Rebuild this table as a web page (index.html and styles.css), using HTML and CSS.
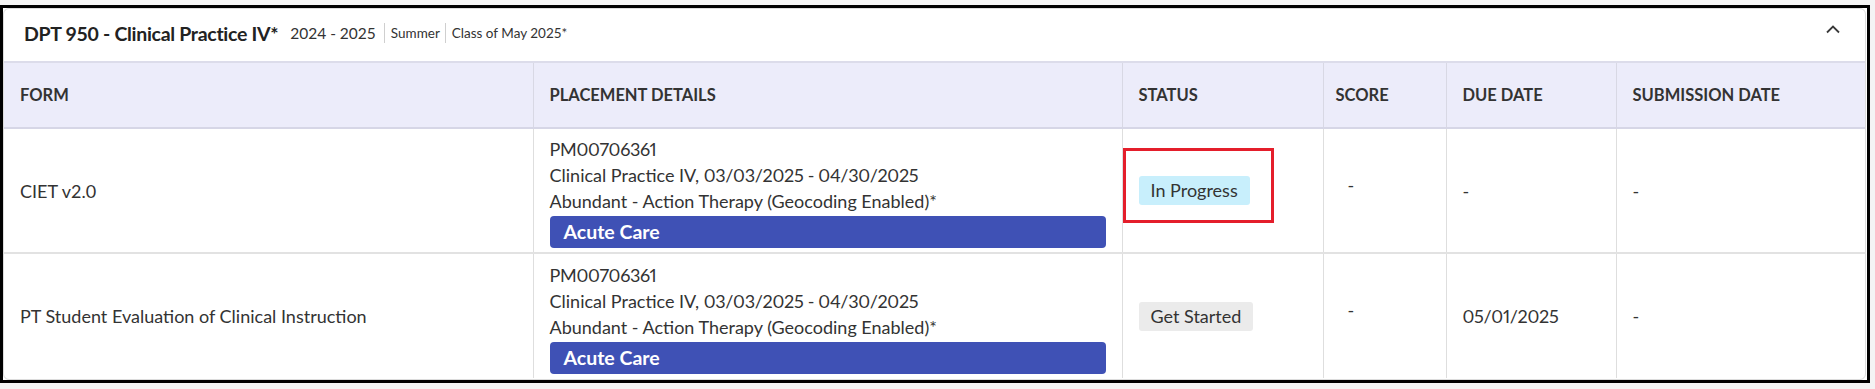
FILE: index.html
```html
<!DOCTYPE html>
<html lang="en">
<head>
<meta charset="utf-8">
<title>Clinical Practice IV</title>
<link rel="stylesheet" href="styles.css">
</head>
<body>
<div class="frame">
  <section class="card">
    <header class="card-head">
      <h2 class="title">DPT 950 - Clinical Practice IV*</h2>
      <span class="year">2024 - 2025</span>
      <span class="meta">Summer</span>
      <span class="meta">Class of May 2025*</span>
      <button class="collapse" aria-label="Collapse">
        <svg width="16" height="10" viewBox="0 0 16 10"><polyline points="2,8.5 8,2.5 14,8.5" fill="none" stroke="#3a3a3a" stroke-width="1.8"/></svg>
      </button>
    </header>
    <table class="grid">
      <colgroup>
        <col class="c-form"><col class="c-place"><col class="c-status"><col class="c-score"><col class="c-due"><col class="c-sub">
      </colgroup>
      <thead>
        <tr>
          <th>Form</th>
          <th>Placement Details</th>
          <th>Status</th>
          <th class="th-score">Score</th>
          <th>Due Date</th>
          <th>Submission Date</th>
        </tr>
      </thead>
      <tbody>
        <tr>
          <td>CIET v2.0</td>
          <td class="place">
            <div><span class="num">PM00706361</span></div>
            <div>Clinical Practice IV, <span class="num">03/03/2025 - 04/30/2025</span></div>
            <div>Abundant - Action Therapy (Geocoding Enabled)*</div>
            <div class="tag">Acute Care</div>
          </td>
          <td class="status">
            <span class="badge progress">In Progress</span>
            <span class="highlight"></span>
          </td>
          <td class="score">-</td>
          <td>-</td>
          <td>-</td>
        </tr>
        <tr>
          <td>PT Student Evaluation of Clinical Instruction</td>
          <td class="place">
            <div><span class="num">PM00706361</span></div>
            <div>Clinical Practice IV, <span class="num">03/03/2025 - 04/30/2025</span></div>
            <div>Abundant - Action Therapy (Geocoding Enabled)*</div>
            <div class="tag">Acute Care</div>
          </td>
          <td class="status">
            <span class="badge start">Get Started</span>
          </td>
          <td class="score">-</td>
          <td><span class="num">05/01/2025</span></td>
          <td>-</td>
        </tr>
      </tbody>
    </table>
  </section>
</div>
</body>
</html>
```

FILE: styles.css
```css
* { box-sizing: border-box; }

html, body {
  margin: 0;
  padding: 0;
}

body {
  background: #f4f4f4;
  font-family: "Lato", "Liberation Sans", sans-serif;
  color: #333;
  padding-top: 5px;
}

.frame {
  width: 1870px;
  height: 378px;
  border: 3px solid #000;
  background: #fff;
  padding-right: 1px;
}

.card {
  height: 100%;
  border: 1px solid #dcdcdc;
  border-radius: 6px;
  background: #fff;
  overflow: hidden;
}

.card-head {
  display: flex;
  align-items: center;
  height: 54px;
  padding: 0 24px 4px 20px;
  border-bottom: 2px solid #dcdcea;
}

.title {
  margin: 0 12px 0 0;
  font-size: 19.5px;
  font-weight: 700;
  color: #222;
  letter-spacing: -0.3px;
}

.year {
  font-size: 15.5px;
  color: #333;
  padding-right: 8px;
}

.meta {
  font-size: 13.5px;
  color: #333;
  border-left: 1px solid #cfcfcf;
  padding: 2px 5px 2px 6px;
  line-height: 16px;
}

.collapse {
  margin-left: auto;
  margin-bottom: 8px;
  border: 0;
  background: none;
  padding: 0;
  display: flex;
  align-items: center;
  cursor: pointer;
}

.grid {
  width: 100%;
  border-collapse: collapse;
  table-layout: fixed;
  font-size: 18px;
}

.num {
  font-variant-numeric: proportional-nums;
  letter-spacing: -0.3px;
}

.c-form { width: 529px; }
.c-place { width: 589px; }
.c-status { width: 201px; }
.c-score { width: 123px; }
.c-due { width: 170px; }

.grid th {
  background: #ececfa;
  height: 65px;
  text-align: left;
  text-transform: uppercase;
  font-weight: 700;
  font-size: 16.5px;
  color: #333;
  padding: 0 16px;
  border-left: 1px solid #d8d8e4;
  border-bottom: 2px solid #d6d6e6;
}

.grid th:first-child,
.grid td:first-child { border-left: 0; }

.grid th.th-score { padding-left: 12px; }

.grid td {
  padding: 0 16px;
  border-left: 1px solid #dedede;
  border-bottom: 2px solid #e2e2e2;
  vertical-align: middle;
  line-height: 26px;
}

.grid tbody tr:last-child td { border-bottom: 0; }

.grid tbody tr:first-child { height: 124px; }
.grid tbody tr:last-child { height: 125px; }

.grid td.place {
  padding: 7px 16px 4px;
}

.tag {
  margin-top: 2px;
  height: 32px;
  line-height: 32px;
  background: #3f51b5;
  color: #fff;
  font-weight: 700;
  font-size: 19.5px;
  border-radius: 4px;
  padding-left: 14px;
}

.status { position: relative; }

.badge {
  display: inline-block;
  height: 29px;
  line-height: 29px;
  padding: 0 12px;
  border-radius: 3px;
  font-size: 18px;
  color: #333;
}

.progress { background: #c8effc; }
.start { background: #ebebeb; }

.highlight {
  position: absolute;
  left: 0;
  top: 19px;
  width: 151px;
  height: 75px;
  border: 3px solid #e41e2b;
}

.grid td.score {
  padding-left: 24px;
  padding-bottom: 12px;
}
```
